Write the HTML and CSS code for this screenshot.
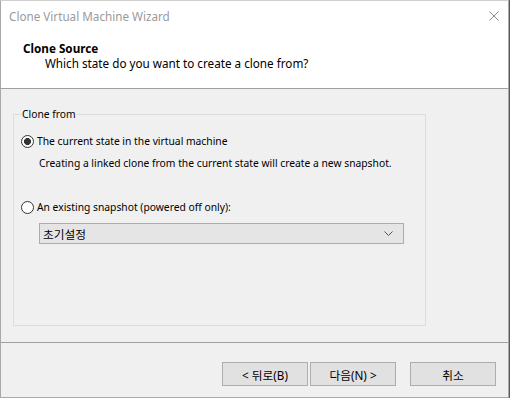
FILE: index.html
```html
<!DOCTYPE html>
<html lang="ko">
<head>
    <meta charset="UTF-8">
    <title>Clone Virtual Machine Wizard</title>
    <link rel="stylesheet" href="styles.css">
</head>
<body>
    <div class="window">
        <div class="titlebar">
            <span class="title">Clone Virtual Machine Wizard</span>
            <svg class="close" width="10" height="10" viewBox="0 0 10 10">
                <path d="M0.5 0.5 L9.5 9.5 M9.5 0.5 L0.5 9.5" stroke="#8a8a8a" stroke-width="1" fill="none"/>
            </svg>
        </div>
        <div class="header">
            <div class="header-title">Clone Source</div>
            <div class="header-sub">Which state do you want to create a clone from?</div>
        </div>
        <div class="content">
            <fieldset class="group">
                <legend>Clone from</legend>
                <div class="option first">
                    <span class="radio checked"></span>
                    <span>The current state in the virtual machine</span>
                </div>
                <p class="desc">Creating a linked clone from the current state will create a new snapshot.</p>
                <div class="option second">
                    <span class="radio"></span>
                    <span>An existing snapshot (powered off only):</span>
                </div>
                <div class="select">
                    <span class="select-text">초기설정</span>
                    <svg width="9" height="5" viewBox="0 0 9 5">
                        <path d="M0.5 0.5 L4.5 4.5 L8.5 0.5" stroke="#555" stroke-width="1" fill="none"/>
                    </svg>
                </div>
            </fieldset>
        </div>
        <div class="footer">
            <button class="btn">&lt; 뒤로(B)</button>
            <button class="btn">다음(N) &gt;</button>
            <button class="btn cancel">취소</button>
        </div>
    </div>
</body>
</html>
```

FILE: styles.css
```css
html, body {
    margin: 0;
    padding: 0;
    background-color: #5a5a5a;
}
body {
    font-family: "Noto Sans", "Noto Sans CJK KR", sans-serif;
    font-size: 11.7px;
    color: #000;
}
.window {
    width: 509px;
    height: 398px;
    box-sizing: border-box;
    border: 1px solid #a9a9a9;
    border-top-color: #d0d0d0;
    background-color: #f0f0f0;
    display: flex;
    flex-direction: column;
}
.titlebar {
    height: 30px;
    background-color: #fff;
    display: flex;
    align-items: center;
    justify-content: space-between;
    padding: 0 9px 0 8px;
}
.title {
    color: #9a9a9a;
    line-height: 16px;
}
.close {
    display: block;
}
.header {
    height: 58px;
    box-sizing: border-box;
    background-color: #fff;
    border-bottom: 1px solid #a0a0a0;
    padding: 10px 0 0 22px;
    line-height: 15px;
}
.header-title {
    font-weight: bold;
}
.header-sub {
    padding-left: 22px;
}
.content {
    height: 253px;
    padding: 17px 0 0 12px;
    box-sizing: border-box;
}
.group {
    margin: 0;
    width: 413px;
    height: 220px;
    box-sizing: border-box;
    border: 1px solid #dcdcdc;
    padding: 0 7px;
    font-size: 10.3px;
}
.group legend {
    padding: 0 1px;
    line-height: 16px;
}
.option {
    display: flex;
    align-items: center;
    gap: 3px;
    height: 16px;
    line-height: 16px;
    white-space: nowrap;
}
.option.first {
    margin-top: 11px;
}
.option.second {
    margin-top: 28px;
}
.radio {
    width: 13px;
    height: 13px;
    box-sizing: border-box;
    border-radius: 50%;
    border: 1px solid #333;
    background-color: #fff;
}
.radio.checked {
    background: radial-gradient(circle, #333 0 3.2px, #fff 3.8px);
}
.desc {
    margin: 6px 0 0 18px;
    line-height: 16px;
    white-space: nowrap;
}
.select {
    margin: 8px 0 0 18px;
    width: 365px;
    height: 21px;
    box-sizing: border-box;
    border: 1px solid #acacac;
    background-color: #e5e5e5;
    display: flex;
    align-items: center;
    justify-content: space-between;
    padding: 0 10px 0 3px;
}
.select-text {
    font-size: 11.7px;
}
.select svg {
    display: block;
}
.footer {
    flex: 1;
    border-top: 1px solid #a0a0a0;
    display: flex;
    justify-content: flex-end;
    align-items: flex-start;
    gap: 2px;
    padding: 19px 12px 0 0;
}
.btn {
    width: 86px;
    height: 24px;
    box-sizing: border-box;
    border: 1px solid #adadad;
    background-color: #e1e1e1;
    font-family: "Noto Sans", "Noto Sans CJK KR", sans-serif;
    font-size: 11.7px;
    color: #000;
    padding: 0;
    margin: 0;
}
.btn.cancel {
    margin-left: 12px;
}
```
